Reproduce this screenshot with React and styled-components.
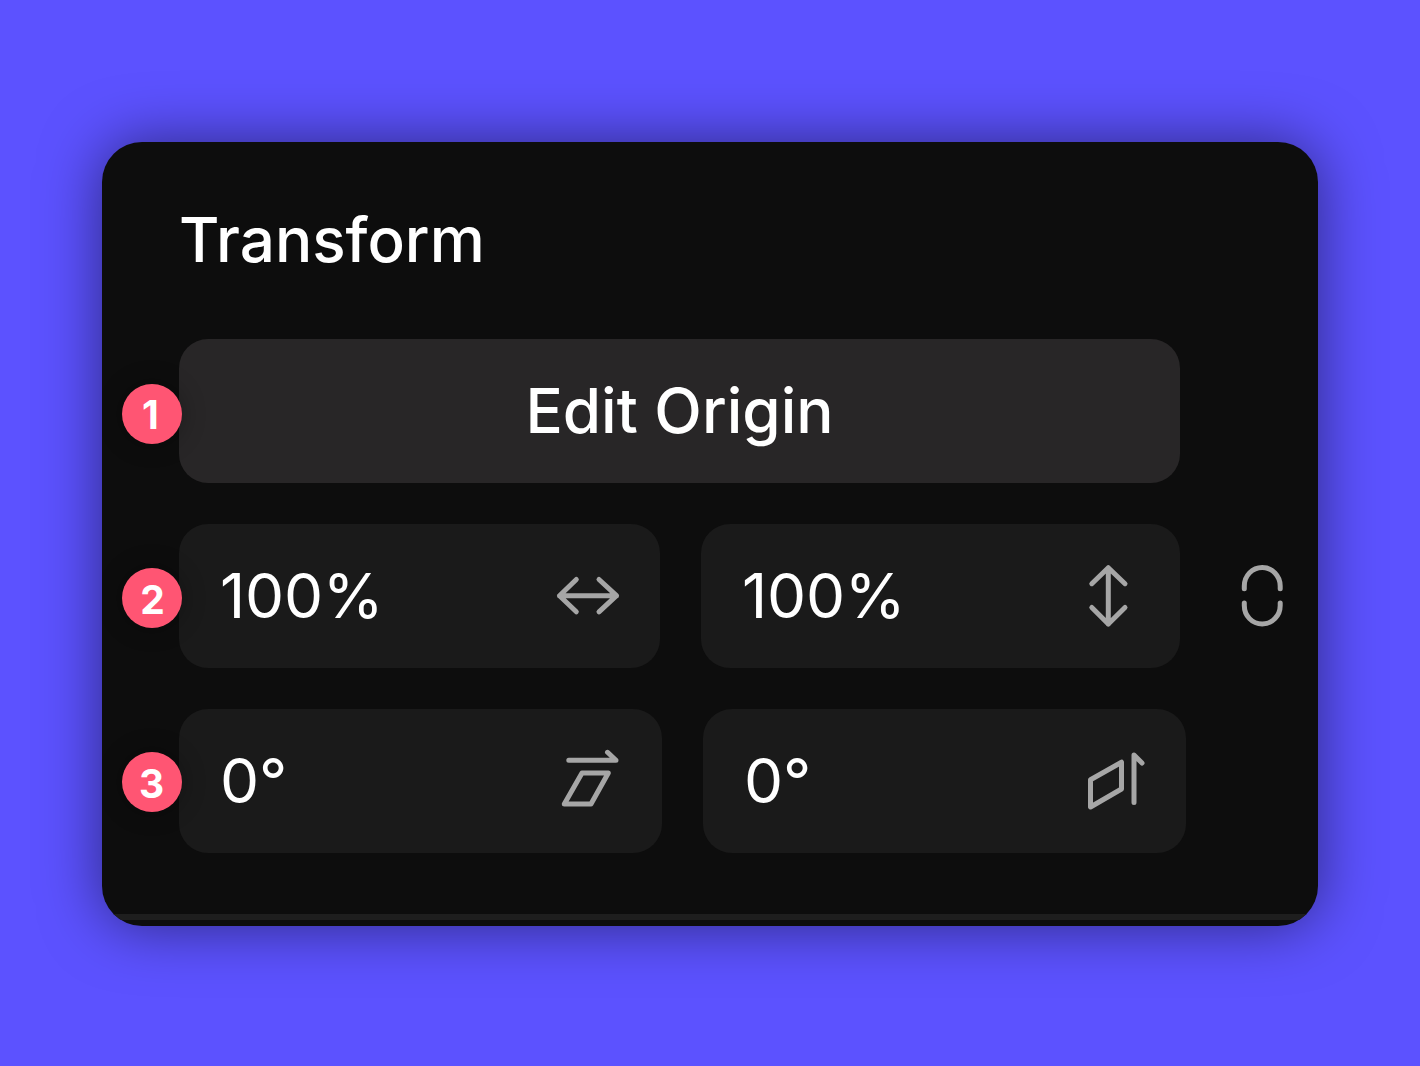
import styled, { createGlobalStyle } from 'styled-components';

const GlobalStyle = createGlobalStyle`
  * {
    box-sizing: border-box;
  }

  body {
    margin: 0;
    background-color: #5c52ff;
    font-family: 'Inter', sans-serif;
  }
`;

function WidthIcon() {
  return (
    <StyledIcon width={70} height={70} viewBox="0 0 70 70" $right={38}>
      <path d="M7.5 35.7H64.5M24.3 19.5L7.5 35.7L24.3 51.8M47 19.5L64.5 35.7L47 51.8" />
    </StyledIcon>
  );
}

function HeightIcon() {
  return (
    <StyledIcon width={70} height={70} viewBox="0 0 70 70" $right={37}>
      <path d="M35.3 7.7V64M18.8 23.7L35.3 7.7L52 23.7M18.8 47.5L35.3 64L52 47.5" />
    </StyledIcon>
  );
}

function SkewXIcon() {
  return (
    <StyledIcon width={70} height={70} viewBox="0 0 70 70" $right={38}>
      <path d="M14.8 15.3H62L53.5 7.3M28 28H54.3L37 59H10.3L28 28Z" />
    </StyledIcon>
  );
}

function SkewYIcon() {
  return (
    <StyledIcon width={70} height={70} viewBox="0 0 70 70" $right={35}>
      <path d="M9.5 34.7L40.5 17.2V44L9.5 62V34.7ZM53 57.5V10L61 18" />
    </StyledIcon>
  );
}

function LinkIcon() {
  return (
    <StyledIcon width={50} height={70} viewBox="0 0 50 70">
      <path d="M7.3 27.7V25C7.3 14.7 15.2 6.5 25.2 6.5S43.2 14.7 43.2 25V27.7" />
      <path d="M7.3 42V44.5C7.3 54.8 15.2 63 25.2 63S43.2 54.8 43.2 44.5V42" />
    </StyledIcon>
  );
}

function App() {
  return (
    <>
      <GlobalStyle />
      <Page>
        <Panel>
          <Title>Transform</Title>

          <Row>
            <Badge $top={45} $padding="0 3px 0 0">
              1
            </Badge>
            <EditButton>Edit Origin</EditButton>
          </Row>

          <Row>
            <Badge $top={44} $padding="2px 0 0 1px">
              2
            </Badge>
            <Field $width={481}>
              <Value>100%</Value>
              <WidthIcon />
            </Field>
            <Field $width={479}>
              <Value>100%</Value>
              <HeightIcon />
            </Field>
            <LinkButton aria-label="link">
              <LinkIcon />
            </LinkButton>
          </Row>

          <Row>
            <Badge $top={43} $padding="2px 1px 0 0">
              3
            </Badge>
            <Field $width={483}>
              <Value>0°</Value>
              <SkewXIcon />
            </Field>
            <Field $width={483}>
              <Value>0°</Value>
              <SkewYIcon />
            </Field>
          </Row>

          <Divider />
        </Panel>
      </Page>
    </>
  );
}

export default App;

const Page = styled.div`
  display: flex;
  justify-content: center;

  height: 1066px;
  padding-top: 142px;

  overflow: hidden;
`;

const Panel = styled.section`
  display: flex;
  flex-direction: column;
  gap: 41px;

  width: 1216px;
  height: 784px;
  padding: 60px 0 6px;

  border-radius: 40px;
  background-color: #0d0d0d;
  box-shadow: 0 0 60px rgba(0, 0, 0, 0.5);

  overflow: hidden;
`;

const Title = styled.h2`
  height: 96px;
  margin: 0;
  padding-left: 77px;

  color: #fff;
  font-size: 62px;
  font-weight: 500;
  line-height: 76px;
`;

const Row = styled.div`
  display: flex;
  gap: 41px;

  position: relative;

  height: 144px;
  padding-left: 77px;
`;

const Badge = styled.span`
  display: flex;
  justify-content: center;
  align-items: center;

  position: absolute;
  top: ${({ $top }) => $top}px;
  left: 20px;

  width: 60px;
  height: 60px;
  padding: ${({ $padding }) => $padding};

  border-radius: 50%;
  background-color: #ff5573;
  box-shadow: 0 0 24px rgba(0, 0, 0, 0.3);

  color: #fff;
  font-size: 39px;
  font-weight: 700;
  line-height: 1;
`;

const EditButton = styled.button`
  width: 1001px;
  height: 144px;
  padding: 0 0 2px;

  border: none;
  border-radius: 29px;
  background-color: #282627;

  color: #fff;
  font-family: inherit;
  font-size: 62px;
  font-weight: 500;
`;

const Field = styled.div`
  display: flex;
  justify-content: space-between;
  align-items: center;

  width: ${({ $width }) => $width}px;
  height: 144px;
  padding: 0 0 2px 41px;

  border-radius: 29px;
  background-color: #1a1a1a;
`;

const Value = styled.span`
  color: #fff;
  font-size: 62px;
  font-weight: 400;
  letter-spacing: -0.2px;
`;

const LinkButton = styled.button`
  display: flex;
  align-items: center;

  margin-left: 16px;
  padding: 0;

  border: none;
  background: none;
`;

const StyledIcon = styled.svg`
  flex-shrink: 0;

  margin-right: ${({ $right = 0 }) => $right}px;

  fill: none;
  stroke: #a6a6a6;
  stroke-width: 5;
  stroke-linecap: round;
  stroke-linejoin: round;
`;

const Divider = styled.div`
  flex-shrink: 0;

  height: 6px;
  margin-top: auto;

  background-color: #1e1e1e;
`;
